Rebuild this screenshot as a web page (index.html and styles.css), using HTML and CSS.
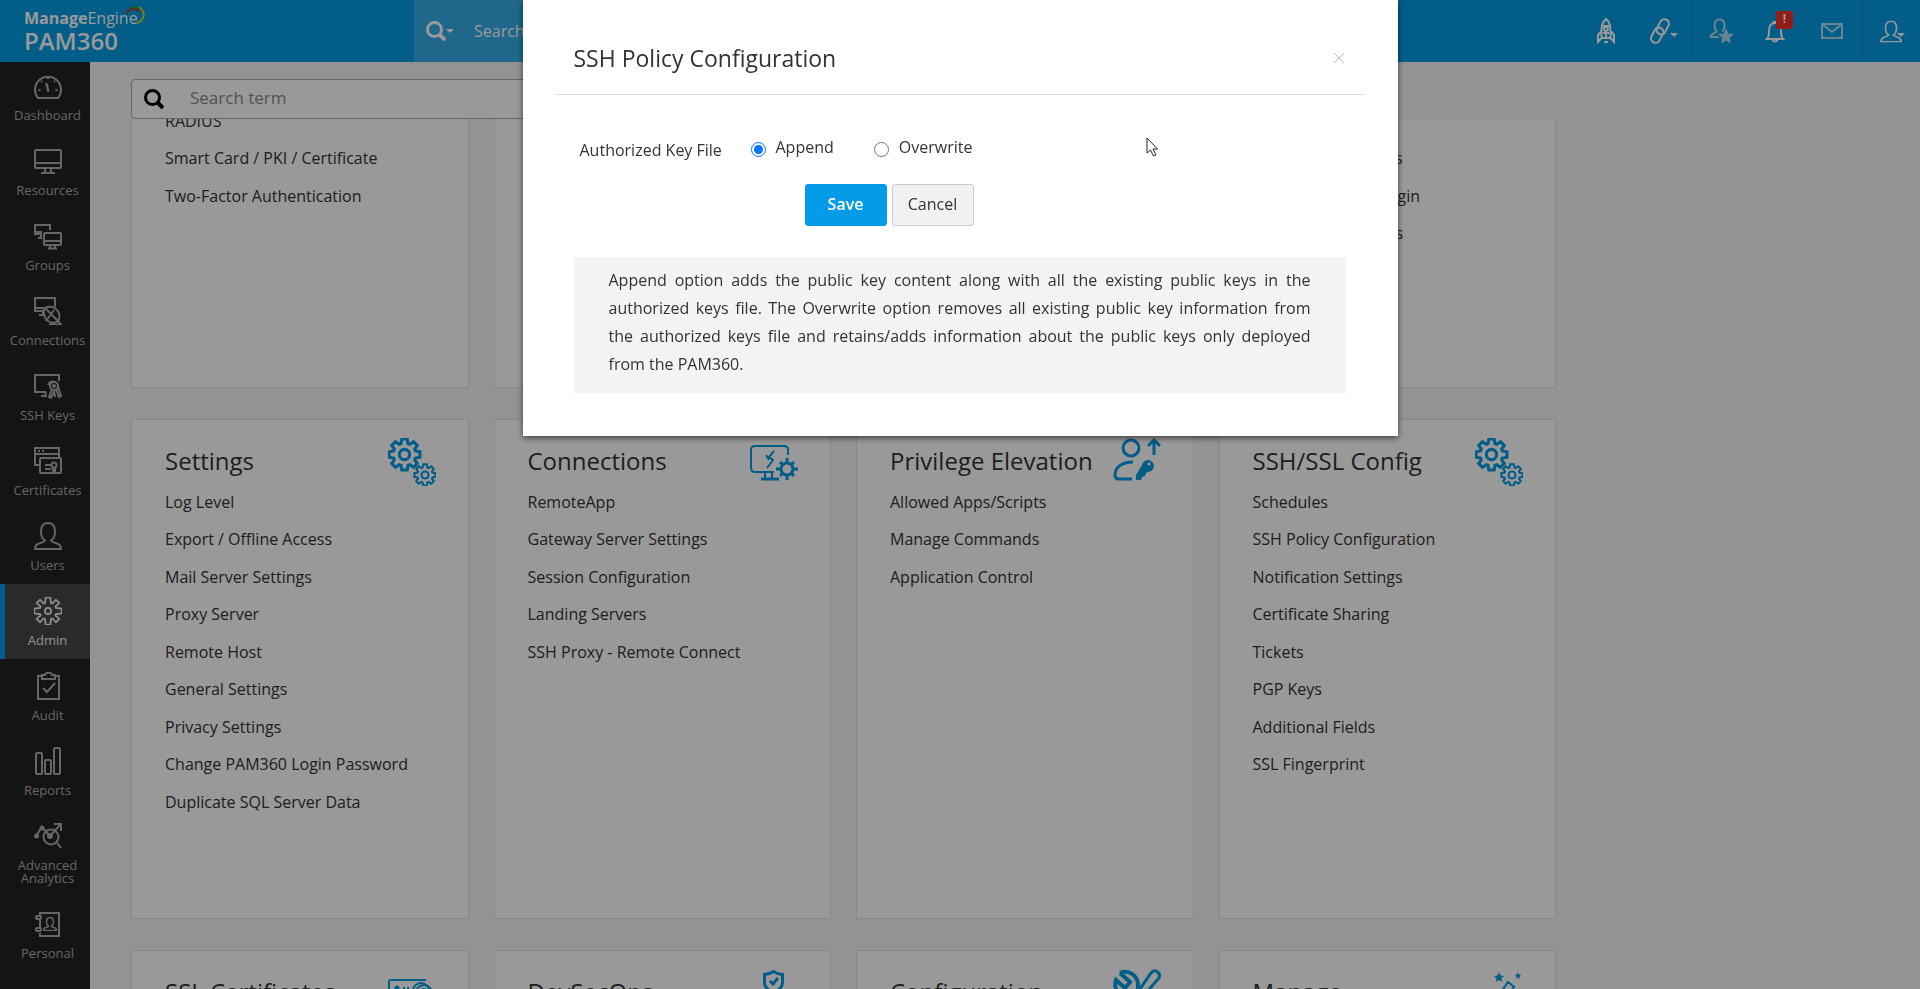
FILE: index.html
```html
<!DOCTYPE html>
<html lang="en">
<head>
  <meta charset="UTF-8" />
  <meta name="viewport" content="width=device-width, initial-scale=1.0" />
  <title>ManageEngine PAM360</title>
  <link rel="stylesheet" href="styles.css">
</head>
<body>

<!-- shared icons -->
<svg class="sprite" aria-hidden="true">
  <symbol id="gear" viewBox="-17 -17 34 34">
    <path d="M-2.6-15H2.6L3.4-10.6 5.1-9.9 8.8-12.4 12.4-8.8 9.9-5.1 10.6-3.4 15-2.6V2.6L10.6 3.4 9.9 5.1 12.4 8.8 8.8 12.4 5.1 9.9 3.4 10.6 2.6 15H-2.6L-3.4 10.6-5.1 9.9-8.8 12.4-12.4 8.8-9.9 5.1-10.6 3.4-15 2.6V-2.6L-10.6-3.4-9.9-5.1-12.4-8.8-8.8-12.4-5.1-9.9-3.4-10.6Z"/>
    <circle r="5"/>
  </symbol>
  <symbol id="gears" viewBox="0 0 48 48">
    <use href="#gear" x="-1" y="-1" width="35" height="35" stroke-width="3"/>
    <use href="#gear" x="25" y="25" width="24" height="24" stroke-width="3"/>
  </symbol>
  <symbol id="gear-deep" viewBox="-17 -17 34 34">
    <path d="M-2.600-15.500H2.600L3.400-9 5-8.400 9-12.800 12.800-9 8.400-5 9-3.400 15.500-2.600V2.600L9 3.400 8.400 5 12.800 9 9 12.800 5 8.400 3.400 9 2.600 15.500H-2.600L-3.400 9-5 8.400-9 12.800-12.800 9-8.400 5-9 3.400-15.500 2.600V-2.600L-9-3.400-8.400-5-12.800-9-9-12.800-5-8.400-3.400-9Z"/>
    <circle r="3.500"/>
  </symbol>
  <symbol id="user" viewBox="0 0 28 28">
    <path d="M11 18.5c-2.500-1.500-4-4.500-4-9C7 4 9.500 1 14 1s7 3 7 8.500c0 4.500-1.500 7.500-4 9 1 1.500 3.500 2 6 3 3 1 4 2.500 4 5.500H1c0-3 1-4.500 4-5.500 2.500-1 5-1.500 6-3z"/>
  </symbol>
  <symbol id="search" viewBox="0 0 20 20">
    <circle cx="8.500" cy="8.500" r="7"/>
    <path d="M13 13l6 6" stroke-width="4"/>
  </symbol>
</svg>

<header class="topbar">
  <a class="logo" href="#">
    <span class="logo-company"><b>Manage</b>Engine</span>
    <span class="logo-product">PAM360</span>
    <svg class="logo-arc" viewBox="0 0 22 20">
      <path d="M1 8C5 3 9 3 14 6" stroke="#c8324a"/>
      <path d="M4 4C9 0 15 2 17 8" stroke="#12a05c"/>
      <path d="M14 2c7 5 6 13-2 16" stroke="#d9c93a"/>
    </svg>
  </a>
  <div class="top-search">
    <svg class="top-search-icon"><use href="#search"/></svg>
    <span class="caret"></span>
    <input type="text" placeholder="Search" aria-label="Search">
  </div>
  <nav class="top-icons">
    <a class="ti-rocket" href="#" aria-label="Quick start">
      <svg width="20" height="26" viewBox="0 0 20 26">
        <path d="M10 1C6.500 4 5.500 8 5.500 12v8h9v-8c0-4-1-8-4.500-11zM5.500 13L2 17v7l3.500-4M14.500 13l3.500 4v7l-3.500-4M7 8h6M7 15h6M8 24h4M10 16v4" />
        <circle cx="10" cy="11" r="2"/>
      </svg>
    </a>
    <a class="ti-link" href="#" aria-label="Links">
      <svg width="20" height="26" viewBox="0 0 20 26">
        <g transform="rotate(28 10 13)">
          <rect x="6" y="0" width="9" height="16" rx="4.500"/>
          <rect x="5" y="10" width="9" height="16" rx="4.500"/>
        </g>
      </svg>
      <span class="caret"></span>
    </a>
    <a class="ti-star" href="#" aria-label="Favorite users">
      <svg width="26" height="26" viewBox="0 0 26 26">
        <path d="M8 13c-2-1-2.500-3-2.500-6C5.500 3 7 1.500 10.500 1.500s5 1.500 5 5.500c0 3-.500 5-2.500 6M8 13c0 2-6.500 2-6.500 6H10"/>
        <path class="solid" d="M17 10l2.300 5.400 5.700.600-4.300 3.800 1.300 5.700-5-3-5 3 1.300-5.700L9 16l5.700-.600z"/>
      </svg>
    </a>
    <a class="ti-bell" href="#" aria-label="Alerts">
      <svg width="20" height="24" viewBox="0 0 20 24">
        <path d="M8 3h4M2 20c2-2 2-4 2-8 0-5 2-8 6-8s6 3 6 8c0 4 0 6 2 8zM7.500 21c1 2 4 2 5 0"/>
      </svg>
      <span class="badge">!</span>
    </a>
    <a class="ti-mail" href="#" aria-label="Mail">
      <svg width="22" height="16" viewBox="0 0 22 16">
        <path d="M1 1h20v14H1zM1 1l10 8L21 1"/>
      </svg>
    </a>
    <a class="ti-user" href="#" aria-label="My account">
      <svg width="22" height="23" viewBox="0 0 28 28" stroke-width="3"><use href="#user"/></svg>
      <span class="caret"></span>
    </a>
  </nav>
</header>

<div class="page">
  <nav class="sidebar">
    <a href="#">
      <svg viewBox="0 0 28 28"><path d="M4 26a13 13 0 1 1 20 0zM12 11l2.500 9M14 5.500V7M7 9l1 1M21 9l-1 1M4.500 18h2M23.500 18h-2M12.800 12l1.600 7"/></svg>
      <span>Dashboard</span>
    </a>
    <a href="#">
      <svg viewBox="0 0 28 28"><rect x="1" y="3" width="26" height="18" rx="1"/><path d="M1 16h26M11 21v4M17 21v4M7 26h14"/></svg>
      <span>Resources</span>
    </a>
    <a href="#">
      <svg viewBox="0 0 28 28"><path d="M8 12H1V3h15v5M1 10h7M7 12v4M4 16h4"/><rect x="10" y="11" width="17" height="12" rx="1"/><path d="M10 19h17M16 23v3M21 23v3M14 26.500h9"/></svg>
      <span>Groups</span>
    </a>
    <a href="#">
      <svg viewBox="0 0 28 28"><path d="M9 14H1V1h20v9M1 11h9M9 14v4M5 18h6"/><path d="M11 11l13 13c-4 3-9 2-12-2-2-3-3-8-1-11c3-2 9-2 12 2 3 3 3 8 1 11M12 24l8-11M18 25l-2 2.500h11l-4-5"/></svg>
      <span>Connections</span>
    </a>
    <a href="#">
      <svg viewBox="0 0 28 28"><path d="M12 20H1V3h24v6M7 24h6M12 20l-1 4"/><circle cx="20" cy="14" r="4"/><circle cx="20" cy="14" r="1"/><path d="M14 13c1-3 4-4 7-3M18 17l-3 8 2 1 3-7M22 17l3 8 2-1-3-9M20 19l1 6"/></svg>
      <span>SSH Keys</span>
    </a>
    <a href="#">
      <svg viewBox="0 0 28 28"><path d="M6 18H1V1h24v9M1 7h24M4 4h2M8 4h2"/><rect x="6" y="11" width="21" height="15" rx="1"/><path d="M11 18h6M11 22h6M19 21v4l1-1 1 1v-4"/><circle cx="20" cy="18" r="2.500"/></svg>
      <span>Certificates</span>
    </a>
    <a href="#">
      <svg viewBox="0 0 28 28"><use href="#user"/></svg>
      <span>Users</span>
    </a>
    <a class="active" href="#">
      <svg viewBox="0 0 28 28"><use href="#gear-deep" x="-1" y="-1" width="30" height="30"/></svg>
      <span>Admin</span>
    </a>
    <a href="#">
      <svg viewBox="0 0 28 28"><path d="M8 4H4v23h21V4h-4M8 3h3c0-3 7-3 7 0h3v4H8zM9 16l4 4 8-9"/></svg>
      <span>Audit</span>
    </a>
    <a href="#">
      <svg viewBox="0 0 28 28"><rect x="2" y="6" width="6" height="21" rx="1"/><rect x="11" y="13" width="6" height="14" rx="1"/><rect x="20" y="1" width="6" height="26" rx="1"/></svg>
      <span>Reports</span>
    </a>
    <a href="#">
      <svg viewBox="0 0 28 28"><path d="M2 14l6-9 8 9L27 2M20 2h7v7M23 21l4 5"/><circle cx="17" cy="15" r="7.500"/><circle class="solid" cx="2.500" cy="14" r="2.500"/><circle class="solid" cx="8" cy="6" r="2.500"/><circle class="solid" cx="16" cy="14" r="3"/></svg>
      <span>Advanced Analytics</span>
    </a>
    <a href="#">
      <svg viewBox="0 0 28 28"><path d="M6 5V3h19v23H6v-3M6 10v7"/><rect x="2" y="6" width="5" height="3" rx="1"/><rect x="2" y="18" width="5" height="3" rx="1"/><use href="#user" x="9" y="7" width="14" height="14" stroke-width="3"/></svg>
      <span>Personal</span>
    </a>
  </nav>

  <main class="content">
    <div class="search-box">
      <svg><use href="#search"/></svg>
      <input type="text" placeholder="Search term" aria-label="Search term">
    </div>

    <div class="scroller" id="scroller">
      <div class="cards">
        <section class="card">
          <h2>Authentication</h2>
          <ul>
            <li><a href="#">Active Directory</a></li>
            <li><a href="#">Microsoft Entra ID</a></li>
            <li><a href="#">LDAP</a></li>
            <li><a href="#">SAML Single Sign On</a></li>
            <li><a href="#">RADIUS</a></li>
            <li><a href="#">Smart Card / PKI / Certificate</a></li>
            <li><a href="#">Two-Factor Authentication</a></li>
          </ul>
        </section>
        <section class="card">
          <h2>Resource Config</h2>
          <ul>
            <li><a href="#">Resource Types</a></li>
            <li><a href="#">Password Policies</a></li>
          </ul>
        </section>
        <section class="card">
          <h2>Integration</h2>
          <ul>
            <li><a href="#">Ticketing System</a></li>
            <li><a href="#">SIEM</a></li>
          </ul>
        </section>
        <section class="card">
          <h2>Customization</h2>
          <ul>
            <li><a href="#">Roles</a></li>
            <li><a href="#">Rebrand</a></li>
            <li><a href="#">Email Templates</a></li>
            <li><a href="#">Message Templates</a></li>
            <li><a href="#">Custom Fields</a></li>
            <li><a href="#">Notification Settings</a></li>
            <li><a href="#">Password Reset Plugin</a></li>
            <li><a href="#">Application Controls</a></li>
          </ul>
        </section>

        <section class="card">
          <svg class="card-icon"><use href="#gears"/></svg>
          <h2>Settings</h2>
          <ul>
            <li><a href="#">Log Level</a></li>
            <li><a href="#">Export / Offline Access</a></li>
            <li><a href="#">Mail Server Settings</a></li>
            <li><a href="#">Proxy Server</a></li>
            <li><a href="#">Remote Host</a></li>
            <li><a href="#">General Settings</a></li>
            <li><a href="#">Privacy Settings</a></li>
            <li><a href="#">Change PAM360 Login Password</a></li>
            <li><a href="#">Duplicate SQL Server Data</a></li>
          </ul>
        </section>
        <section class="card">
          <svg class="card-icon" viewBox="0 0 48 48">
            <path d="M24 34H5q-4 0-4-4V12q0-4 4-4h29q4 0 4 4v5M15 35v6M22 35v6"/>
            <path stroke-width="3" d="M11 41h18"/>
            <path d="M24 13l-5 6 4 3-6 8M16 17l3 5"/>
            <circle cx="37" cy="31" r="6" stroke-width="3"/>
            <path stroke-width="3" d="M37 20v5M37 37v5M26 31h5M43 31h5M30 24l3 3M41 35l3 3M44 24l-3 3M33 35l-3 3"/>
          </svg>
          <h2>Connections</h2>
          <ul>
            <li><a href="#">RemoteApp</a></li>
            <li><a href="#">Gateway Server Settings</a></li>
            <li><a href="#">Session Configuration</a></li>
            <li><a href="#">Landing Servers</a></li>
            <li><a href="#">SSH Proxy - Remote Connect</a></li>
          </ul>
        </section>
        <section class="card">
          <svg class="card-icon" viewBox="0 0 48 48">
            <g stroke-width="3">
              <circle cx="18" cy="10" r="8"/>
              <path d="M20 24C8 24 2 30 2 37q0 4 4 4h13M41 17V3M35 8l6-6 6 6"/>
            </g>
            <path class="solid" d="M29 27a6 6 0 1 1 6 7l-2 1-1 3-3 1-1 3h-5v-5z"/>
            <circle class="hole" cx="36" cy="26" r="1.500"/>
          </svg>
          <h2>Privilege Elevation</h2>
          <ul>
            <li><a href="#">Allowed Apps/Scripts</a></li>
            <li><a href="#">Manage Commands</a></li>
            <li><a href="#">Application Control</a></li>
          </ul>
        </section>
        <section class="card">
          <svg class="card-icon"><use href="#gears"/></svg>
          <h2>SSH/SSL Config</h2>
          <ul>
            <li><a href="#">Schedules</a></li>
            <li><a href="#">SSH Policy Configuration</a></li>
            <li><a href="#">Notification Settings</a></li>
            <li><a href="#">Certificate Sharing</a></li>
            <li><a href="#">Tickets</a></li>
            <li><a href="#">PGP Keys</a></li>
            <li><a href="#">Additional Fields</a></li>
            <li><a href="#">SSL Fingerprint</a></li>
          </ul>
        </section>

        <section class="card">
          <svg class="card-icon" viewBox="0 0 48 48">
            <path d="M38 11H3q-2 0-2 2v25q0 2 2 2h36q2 0 2-2M15 19h2M19 19h2M6 30h18"/>
            <circle class="solid" cx="9" cy="19" r="2.500"/>
            <circle cx="33" cy="22" r="8"/><circle cx="36" cy="24" r="8"/><circle cx="36" cy="24" r="4"/>
          </svg>
          <h2>SSL Certificates</h2>
        </section>
        <section class="card">
          <svg class="card-icon" viewBox="0 0 48 48">
            <path stroke-width="3" d="M23.500 2.500c3 2 6 3 9 3v8c0 5-4 8-9 10-5-2-9-5-9-10v-8c3 0 6-1 9-3z"/>
            <path stroke-width="3" d="M20 12l3 3 5-6"/>
          </svg>
          <h2>DevSecOps</h2>
        </section>
        <section class="card">
          <svg class="card-icon" viewBox="0 0 48 48">
            <path stroke-width="4" d="M7 4c9-4 18 3 18 12v6l16 17M7 4l10 9-5 6-9-8c-2 6 0 12 5 15"/>
            <path stroke-width="3" d="M27 20L38 4c4-5 10 0 8 5L32 25"/>
          </svg>
          <h2>Configuration</h2>
        </section>
        <section class="card">
          <svg class="card-icon" viewBox="0 0 48 48">
            <path class="solid" d="M24 3l1.500 3.500 3.500.500-2.500 2.500.500 3.500-3-2-3 2 .500-3.500L19 7l3.500-.500zM43 3l1 2.500 2 .500-1.500 1.500.500 2.500-2-1.500-2 1.500.500-2.500L40 6l2-.500z"/>
            <path d="M33 13l6 5L22 42l-6-5zM28 19l6 6"/>
          </svg>
          <h2>Manage</h2>
        </section>
      </div>
    </div>
  </main>
</div>

<div class="overlay">
  <div class="modal" role="dialog" aria-labelledby="modalTitle">
    <div class="modal-head">
      <h1 id="modalTitle">SSH Policy Configuration</h1>
      <button class="close" type="button" aria-label="Close">
        <svg viewBox="0 0 12 12"><path d="M1 1l10 10M11 1L1 11"/></svg>
      </button>
    </div>
    <form class="modal-body">
      <div class="field" role="radiogroup" aria-labelledby="keyFile">
        <span class="field-name" id="keyFile">Authorized Key File</span>
        <input type="radio" name="keyfile" id="append" checked>
        <label for="append">Append</label>
        <input type="radio" name="keyfile" id="overwrite">
        <label for="overwrite">Overwrite</label>
      </div>
      <div class="buttons">
        <button class="btn btn-save" type="button">Save</button>
        <button class="btn" type="button">Cancel</button>
      </div>
      <p class="note">Append option adds the public key content along with all the existing public keys in the authorized keys file. The Overwrite option removes all existing public key information from the&nbsp;authorized keys file and retains/adds information about the public keys only deployed from&nbsp;the PAM360.</p>
    </form>
    <svg class="pointer" viewBox="0 0 13 20"><path d="M1 1v15l3.500-3 3 6 2.500-1-3-6h4.500z"/></svg>
  </div>
</div>

<script>
  // open the page on the Settings row
  document.getElementById("scroller").scrollTop = 231;
</script>
</body>
</html>
```
FILE: styles.css
```css
* {box-sizing: border-box;}
body {
  margin: 0;
  height: 100vh;
  display: flex;
  flex-direction: column;
  overflow: hidden;
  background-color: #f5f5f5;
  color: #333;
  font-family: "Open Sans", "Noto Sans", sans-serif;
  font-size: 16px;
}
a {
  color: inherit;
  text-decoration: none;
}
h1,h2 {
  margin: 0;
  font-size: 24px;
  font-weight: 400;
}
ul {
  margin: 0;
  padding: 0;
  list-style: none;
}
input,button {
  font-family: inherit;
  font-size: 16px;
}
svg {
  display: block;
  fill: none;
  stroke: currentColor;
  stroke-width: 2;
}
.sprite {
  position: absolute;
  width: 0;
  height: 0;
}
.solid {
  fill: currentColor;
  stroke: none;
}
.hole {
  fill: #fff;
  stroke: none;
}
.caret {
  border: 4px solid transparent;
  border-top-color: currentColor;
  border-bottom: 0;
}

/* top bar */
.topbar {
  position: relative;
  z-index: 1;
  flex: none;
  display: flex;
  height: 62px;
  background-color: #049be5;
  color: #fff;
}
.logo {
  position: relative;
  width: 414px;
  padding: 8px 0 0 24px;
}
.logo span {display: block;}
.logo-company {
  font-size: 16px;
  line-height: 20px;
}
.logo-product {
  font-size: 24px;
  line-height: 26px;
  font-weight: 600;
}
.logo-arc {
  position: absolute;
  left: 125px;
  top: 5px;
  width: 22px;
  height: 20px;
}
.top-search {
  flex: 1;
  display: flex;
  align-items: center;
  padding: 0 12px;
  background-color: #35ade9;
}
.top-search-icon {
  width: 20px;
  height: 20px;
  stroke-width: 3;
}
.top-search input {
  flex: 1;
  margin-left: 18px;
  border: 0;
  background: none;
  color: #fff;
}
.top-search input::placeholder {color: #fff;}
.top-icons {
  width: 522px;
  margin-left: auto;
  padding-left: 179px;
  display: flex;
  background-color: #049be5;
}
.top-icons a {
  position: relative;
  display: flex;
  align-items: center;
  justify-content: center;
  flex: 0 0 58px;
}
.top-icons .ti-link {flex-basis: 57px;}
.top-icons .ti-bell {flex-basis: 50px;}
.top-icons .ti-mail {flex-basis: 63px;}
.top-icons .ti-star,.top-icons .ti-user {border-left: 1px solid #038bce;}
.top-icons .caret {margin-top: 8px;}
.top-icons .ti-user .caret {margin-left: -5px;}
.ti-star,.ti-mail {color: #b0dbf0;}
.badge {
  position: absolute;
  left: 26px;
  top: 11px;
  width: 17px;
  height: 18px;
  border-radius: 2px;
  background-color: #f03224;
  color: #fff;
  font-size: 12px;
  font-weight: 700;
  line-height: 16px;
  text-align: center;
}

/* sidebar */
.page {
  flex: 1;
  display: flex;
  min-height: 0;
}
.sidebar {
  flex: 0 0 90px;
  margin-top: -3px;
  background-color: #222;
  color: #aaa;
}
.sidebar a {
  display: block;
  min-height: 75px;
  padding: 13px 0 12px;
  border-left: 5px solid transparent;
  font-size: 13px;
  line-height: 13px;
  text-align: center;
}
.sidebar svg {
  width: 28px;
  height: 28px;
  margin: 0 auto 9px;
}
.sidebar .active {
  border-left-color: #049be5;
  background-color: #464646;
  color: #eee;
}

/* admin page */
.content {
  flex: 1;
  display: flex;
  flex-direction: column;
  min-width: 0;
  padding: 17px 41px 0;
}
.search-box {
  flex: none;
  display: flex;
  align-items: center;
  max-width: 1100px;
  height: 40px;
  padding: 0 12px;
  border: 1px solid #aaa;
  border-radius: 4px;
  background-color: #fff;
}
.search-box svg {
  width: 20px;
  height: 20px;
  color: #000;
  stroke-width: 3;
}
.search-box input {
  flex: 1;
  margin-left: 24px;
  padding: 0 2px 3px;
  border: 0;
  background: none;
  font-size: 17px;
}
.search-box input::placeholder {color: #8a8a8a;}
.scroller {
  flex: 1;
  min-height: 0;
  overflow: auto;
  scrollbar-width: none;
}
.cards {
  display: grid;
  grid-template-columns: repeat(4, 1fr);
  gap: 31px 25px;
  max-width: 1425px;
}
.card {
  position: relative;
  height: 500px;
  padding: 23px 33px;
  border: 1px solid #e3e3e3;
  background-color: #fff;
}
.card h2 {line-height: 36px;}
.card ul {
  display: grid;
  grid-template-rows: repeat(10, 1fr);
  align-items: center;
  height: 375px;
  margin-top: 4px;
  line-height: 24px;
}
.card-icon {
  position: absolute;
  right: 32px;
  top: 18px;
  width: 48px;
  height: 48px;
  color: #049be5;
}

/* popup */
.overlay {
  position: fixed;
  inset: 0;
  z-index: 2;
  background-color: rgba(0, 0, 0, .4);
}
.modal {
  position: relative;
  width: 875px;
  max-width: 100%;
  margin: 0 auto;
  padding: 0 33px 43px 32px;
  background-color: #fff;
  box-shadow: 0 2px 6px rgba(0, 0, 0, .6);
}
.modal-head {
  display: flex;
  align-items: center;
  justify-content: space-between;
  padding: 40px 20px 18px 19px;
  border-bottom: 1px solid #ddd;
}
.modal-head h1 {
  font-size: 23px;
  line-height: 36px;
}
.close {
  padding: 0;
  border: 0;
  background: none;
  color: #bbb;
}
.close svg {
  width: 12px;
  height: 12px;
  stroke-width: 1;
}
.modal-body {padding: 40px 19px 0;}
.field {
  display: flex;
  align-items: center;
  height: 28px;
}
.field-name {
  width: 165px;
  margin-top: 2px;
  padding-left: 6px;
}
.field input {
  width: 15px;
  height: 15px;
  margin: 0 10px 0 12px;
}
.field label {margin-bottom: 4px;}
.field label + input {margin-left: 40px;}
.buttons {
  display: flex;
  gap: 5px;
  margin: 21px 0 31px 231px;
}
.btn {
  width: 82px;
  height: 42px;
  padding: 0 0 2px;
  border: 1px solid #ccc;
  border-radius: 3px;
  background-color: #f1f1f1;
  color: #333;
  cursor: pointer;
}
.btn-save {
  border-color: #049be9;
  background-color: #049be9;
  color: #fff;
  font-weight: 600;
}
.note {
  margin: 0;
  padding: 9px 35px 15px;
  background-color: #f3f3f3;
  line-height: 28px;
  text-align: justify;
}
.pointer {
  position: absolute;
  left: 623px;
  top: 137px;
  width: 13px;
  height: 20px;
  fill: #fff;
  stroke: #223;
  stroke-width: 1;
}
```
